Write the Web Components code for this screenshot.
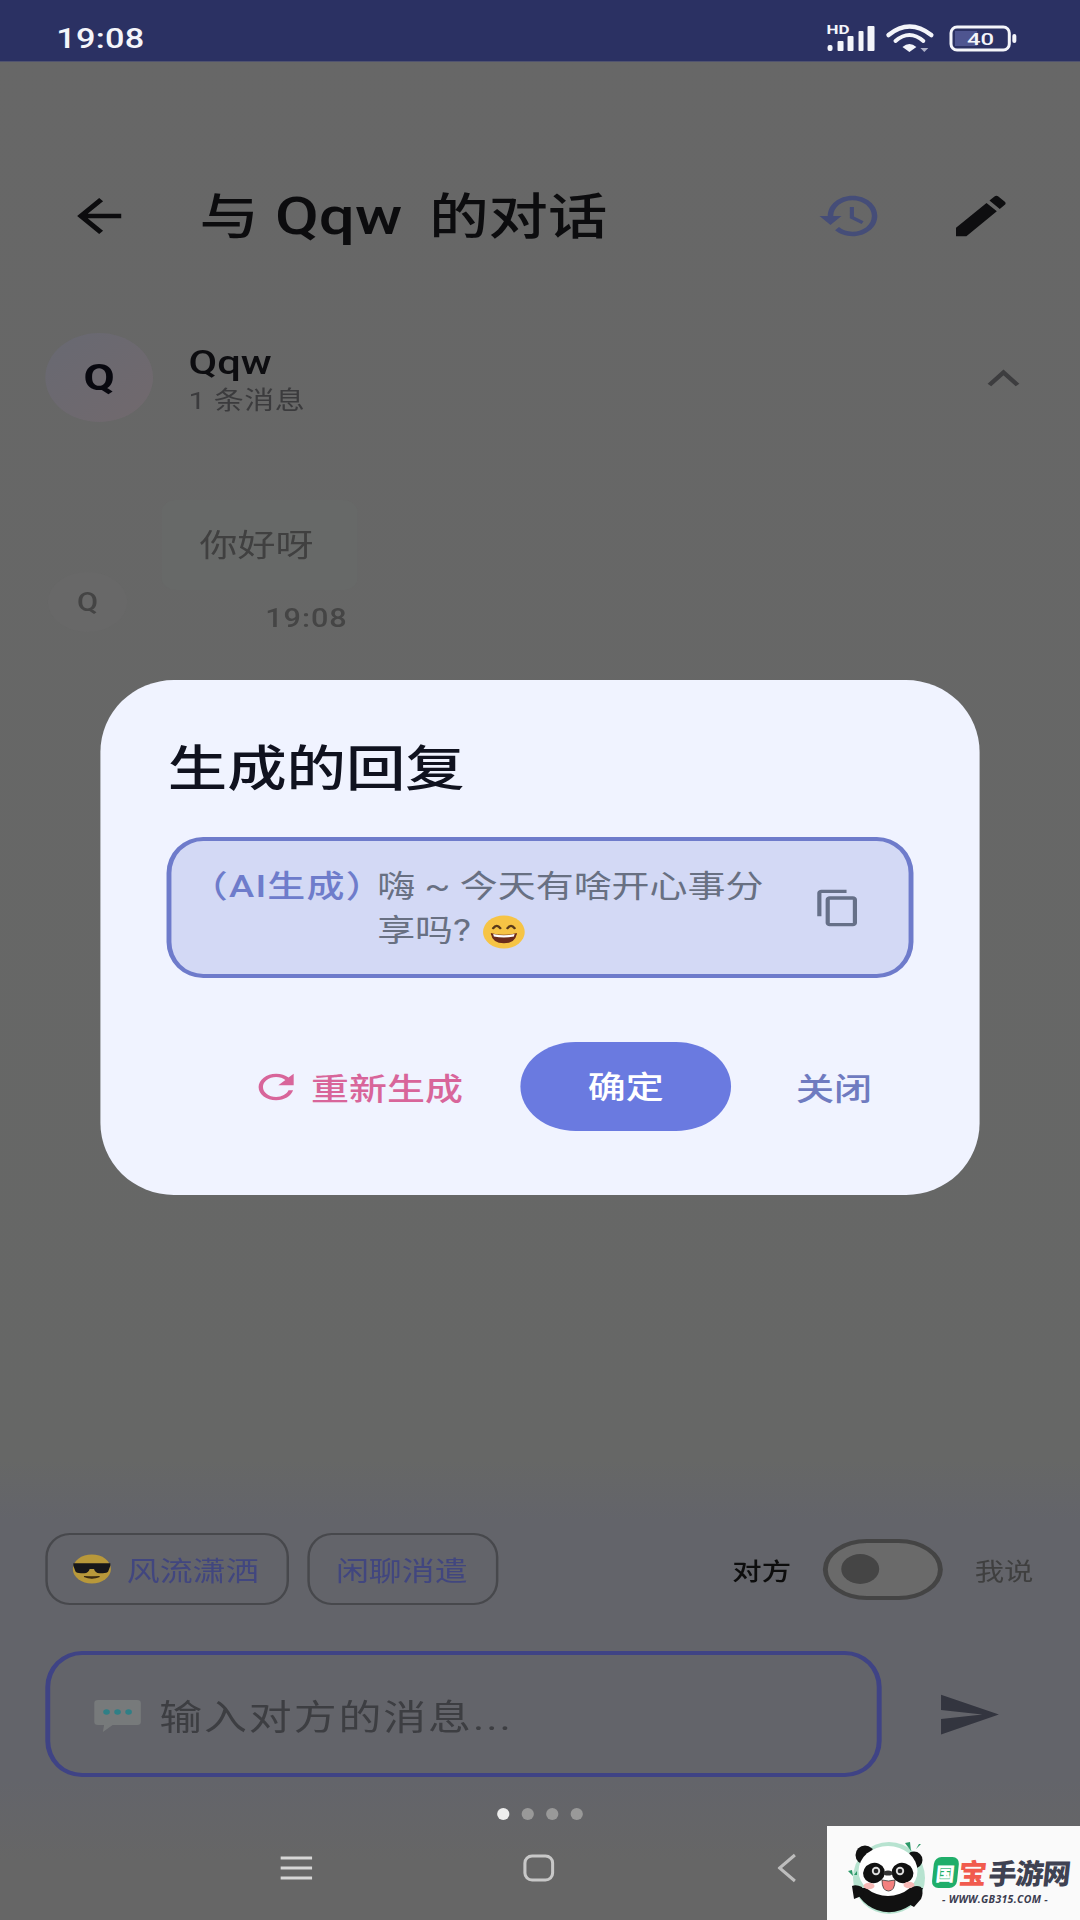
<!DOCTYPE html>
<html lang="zh">
<head>
<meta charset="utf-8">
<title>与 Qqw 的对话</title>
<style>
  html, body { margin: 0; padding: 0; background: #666; }
</style>
</head>
<body>
<phone-screen>
  <status-bar></status-bar>
  <chat-header></chat-header>
  <contact-row name="Qqw" sub="1 条消息"></contact-row>
  <message-row text="你好呀" time="19:08"></message-row>
  <reply-dialog></reply-dialog>
  <bottom-panel></bottom-panel>
  <nav-bar></nav-bar>
  <site-mark slot="mark"></site-mark>
</phone-screen>

<script>
const ICONS = {
  back: 'M20 11H7.83l5.59-5.59L12 4l-8 8 8 8 1.41-1.41L7.83 13H20v-2z',
  history: 'M13 3c-4.97 0-9 4.03-9 9H1l3.89 3.89.07.14L9 12H6c0-3.87 3.13-7 7-7s7 3.13 7 7-3.13 7-7 7c-1.93 0-3.68-.79-4.94-2.06l-1.42 1.42C8.27 19.99 10.51 21 13 21c4.97 0 9-4.03 9-9s-4.03-9-9-9zm-1 5v5l4.28 2.54.72-1.21-3.5-2.08V8H12z',
  edit: 'M3 17.25V21h3.75L17.81 9.94l-3.75-3.75L3 17.25zM20.71 7.04c.39-.39.39-1.02 0-1.41l-2.34-2.34c-.39-.39-1.02-.39-1.41 0l-1.83 1.83 3.75 3.75 1.83-1.83z',
  copy: 'M16 1H4c-1.1 0-2 .9-2 2v14h2V3h12V1zm3 4H8c-1.1 0-2 .9-2 2v14c0 1.1.9 2 2 2h11c1.1 0 2-.9 2-2V7c0-1.1-.9-2-2-2zm0 16H8V7h11v14z',
  refresh: 'M17.65 6.35C16.2 4.9 14.21 4 12 4c-4.42 0-7.99 3.58-7.99 8s3.57 8 7.99 8c3.73 0 6.84-2.55 7.73-6h-2.08c-.82 2.33-3.04 4-5.65 4-3.31 0-6-2.69-6-6s2.69-6 6-6c1.66 0 3.14.69 4.22 1.78L13 11h7V4l-2.35 2.35z',
  send: 'M2.01 21L23 12 2.01 3 2 10l15 2-15 2z'
};

class AppIcon extends HTMLElement {
  constructor() {
    super();
    this.shadowDOM = this.attachShadow({mode: 'open'});
  }
  connectedCallback() {
    const w = this.getAttribute('w') || 54;
    const h = this.getAttribute('h') || 54;
    this.shadowDOM.innerHTML = `
    <style>
      :host { display: block; flex: none; width: ${w}px; height: ${h}px; }
      svg { display: block; width: 100%; height: 100%; fill: currentColor; }
    </style>
    <svg viewBox="0 0 24 24" preserveAspectRatio="none"><path d="${ICONS[this.getAttribute('name')]}"/></svg>
    `;
  }
}
customElements.define('app-icon', AppIcon);

// the whole reference is stretched sideways, so the app is laid out 882 wide and scaled
class PhoneScreen extends HTMLElement {
  constructor() {
    super();
    this.shadowDOM = this.attachShadow({mode: 'open'});
    this.shadowDOM.innerHTML = `
    <style>
      :host {
        display: block;
        position: relative;
        width: 1080px;
        height: 1920px;
        overflow: hidden;
        background: linear-gradient(#676767 0, #666766 1460px, #63646a 1520px, #63646a 1780px, #666 1860px);
        font-family: Roboto, "Noto Sans CJK SC", sans-serif;
        color: #111;
      }
      .stretch {
        position: relative;
        display: flex;
        flex-direction: column;
        width: 882px;
        height: 1920px;
        transform: scaleX(1.2245);
        transform-origin: 0 0;
      }
    </style>
    <div class="stretch"><slot></slot></div>
    <slot name="mark"></slot>
    `;
  }
}
customElements.define('phone-screen', PhoneScreen);

class StatusBar extends HTMLElement {
  constructor() {
    super();
    this.shadowDOM = this.attachShadow({mode: 'open'});
    this.shadowDOM.innerHTML = `
    <style>
      :host {
        display: flex;
        align-items: center;
        flex: none;
        height: 62px;
        padding: 15px 52px 0 46px;
        box-sizing: border-box;
        background: #2b3163;
        border-bottom: 1px solid #50536f;
        color: #f4f5fa;
      }
      .time { font-size: 28px; font-weight: 500; letter-spacing: .2px; flex: 1; }
      svg { display: block; overflow: visible; }
      text { font-family: Roboto, sans-serif; font-weight: 700; fill: #f4f5fa; }
    </style>
    <div class="time">19:08</div>
    <svg width="39.2" height="28" viewBox="0 0 48 28" preserveAspectRatio="none" fill="#f4f5fa">
      <text x="0" y="10" font-size="13" textLength="23" lengthAdjust="spacingAndGlyphs">HD</text>
      <rect x="1" y="21" width="5" height="6" rx="2"/>
      <rect x="11" y="17" width="6" height="10" rx="1"/>
      <rect x="21" y="12" width="6" height="15" rx="1"/>
      <rect x="32" y="7" width="5" height="20" rx="1"/>
      <rect x="41" y="2" width="7" height="25" rx="1"/>
    </svg>
    <svg style="margin-left:10px" width="39" height="28" viewBox="0 0 48 28" preserveAspectRatio="none" fill="none" stroke="#f4f5fa">
      <path d="M2 11Q23-6 45 11" stroke-width="4.5" stroke-linecap="round"/>
      <path d="M9 17Q23 5 37 17" stroke-width="4" stroke-linecap="round"/>
      <path d="M16 23Q23 17 30 23L23 28Z" fill="#f4f5fa" stroke="none"/>
      <path d="M34 24l4 4 4-4z" fill="#aeb1c8" stroke="none"/>
    </svg>
    <svg style="margin-left:12px" width="55" height="27" viewBox="0 0 67 27" preserveAspectRatio="none" fill="none">
      <rect x="2" y="2" width="58" height="23" rx="6" stroke="#f4f5fa" stroke-width="3"/>
      <path d="M6 6h22v15H6z" fill="#4e5590"/>
      <rect x="63" y="9" width="4" height="9" rx="2" fill="#f4f5fa"/>
      <text x="18" y="20" font-size="17" textLength="27" lengthAdjust="spacingAndGlyphs" style="font-weight:500">40</text>
    </svg>
    `;
  }
}
customElements.define('status-bar', StatusBar);

class ChatHeader extends HTMLElement {
  constructor() {
    super();
    this.shadowDOM = this.attachShadow({mode: 'open'});
    this.shadowDOM.innerHTML = `
    <style>
      :host {
        display: flex;
        align-items: center;
        flex: none;
        height: 110px;
        margin-top: 99px;
        padding: 0 54px;
      }
      h1 {
        flex: 1;
        margin: 0 0 0 55px;
        padding-top: 3px;
        font-size: 48.5px;
        line-height: 66px;
        font-weight: 500;
        white-space: nowrap;
        color: #0c0c0e;
      }
      .latin { margin: 0 10px 0 1px; font-size: 52px; }
      .history { color: #454d78; margin-right: 53px; }
    </style>
    <app-icon name="back" style="color:#0c0c0e"></app-icon>
    <h1>与 <span class="latin">Qqw</span> 的对话</h1>
    <app-icon class="history" name="history"></app-icon>
    <app-icon name="edit" style="color:#0e0e10"></app-icon>
    `;
  }
}
customElements.define('chat-header', ChatHeader);

class ContactRow extends HTMLElement {
  constructor() {
    super();
    this.shadowDOM = this.attachShadow({mode: 'open'});
  }
  connectedCallback() {
    this.shadowDOM.innerHTML = `
    <style>
      :host {
        display: flex;
        align-items: center;
        flex: none;
        margin-top: 62px;
        padding: 0 49px 0 37px;
        gap: 29px;
      }
      .avatar {
        display: flex;
        align-items: center;
        justify-content: center;
        width: 88px;
        height: 89px;
        border-radius: 50%;
        background: linear-gradient(135deg, #686972, #71696d);
        font-size: 37px;
        font-weight: 700;
        color: #08080f;
      }
      .info { flex: 1; padding-top: 4px; }
      .name { font-size: 34px; font-weight: 500; line-height: 38px; color: #0d0d10; }
      .sub { font-size: 24.5px; line-height: 32px; margin-top: 4px; letter-spacing: .4px; color: #3b3b3d; }
      svg { display: block; width: 27px; height: 18px; }
    </style>
    <div class="avatar">Q</div>
    <div class="info">
      <div class="name">${this.getAttribute('name')}</div>
      <div class="sub">${this.getAttribute('sub')}</div>
    </div>
    <svg viewBox="0 0 27 18" preserveAspectRatio="none"><path d="M2 16L13.5 3.5 25 16" fill="none" stroke="#3d3d3f" stroke-width="4"/></svg>
    `;
  }
}
customElements.define('contact-row', ContactRow);

class MessageRow extends HTMLElement {
  constructor() {
    super();
    this.shadowDOM = this.attachShadow({mode: 'open'});
  }
  connectedCallback() {
    this.shadowDOM.innerHTML = `
    <style>
      :host {
        display: flex;
        align-items: flex-end;
        flex: none;
        margin-top: 78px;
        padding-left: 39px;
        gap: 28px;
      }
      .avatar {
        display: flex;
        align-items: center;
        justify-content: center;
        width: 65px;
        height: 60px;
        border-radius: 50%;
        background: #686868;
        font-size: 25px;
        font-weight: 500;
        color: #444;
      }
      .col { display: flex; flex-direction: column; align-items: flex-end; }
      .bubble {
        width: 160px;
        height: 90px;
        box-sizing: border-box;
        padding-left: 31px;
        border-radius: 12px;
        background: #676968;
        font-size: 31px;
        line-height: 92px;
        color: #404040;
      }
      .time { margin: 15px 8px 0 0; font-size: 25px; line-height: 27px; font-weight: 500; letter-spacing: .8px; color: #454545; }
    </style>
    <div class="avatar">Q</div>
    <div class="col">
      <div class="bubble">${this.getAttribute('text')}</div>
      <div class="time">${this.getAttribute('time')}</div>
    </div>
    `;
  }
}
customElements.define('message-row', MessageRow);

class ReplyDialog extends HTMLElement {
  constructor() {
    super();
    this.shadowDOM = this.attachShadow({mode: 'open'});
    this.shadowDOM.innerHTML = `
    <style>
      :host {
        display: block;
        position: absolute;
        left: 82px;
        top: 680px;
        width: 718px;
        height: 515px;
        box-sizing: border-box;
        padding: 60px 54px 0;
        border-radius: 60px / 72px;
        background: #f0f3ff;
      }
      h2 {
        margin: 0 0 37px 1px;
        font-size: 48.5px;
        line-height: 60px;
        font-weight: 500;
        color: #10121f;
      }
      .box {
        display: flex;
        box-sizing: border-box;
        width: 610px;
        height: 141px;
        padding: 24px 0 0 15px;
        border: 4px solid #6e7bcb;
        border-radius: 30px / 36px;
        background: #d3d9f5;
        font-size: 31px;
        line-height: 44px;
        color: #687082;
      }
      .tag { flex: none; width: 153px; color: #6e7ccb; font-weight: 500; letter-spacing: 1px; white-space: nowrap; }
      .text { width: 335px; flex: none; }
      svg.emoji { display: inline-block; vertical-align: -8px; width: 35px; height: 34px; margin-left: 2px; }
      .copy { align-self: center; margin: -24px 0 0 21px; color: #667088; }
      .actions {
        display: flex;
        align-items: center;
        justify-content: flex-end;
        margin: 64px 34px 0 0;
        font-size: 31px;
        font-weight: 500;
      }
      .redo { display: flex; align-items: center; gap: 7px; color: #d8659a; }
      .ok {
        width: 172px;
        height: 89px;
        margin: 0 53px 0 47px;
        border-radius: 45px / 44.5px;
        background: #6a7ae0;
        color: #fff;
        text-align: center;
        line-height: 92px;
      }
      .close { color: #6f7bc0; }
    </style>
    <h2>生成的回复</h2>
    <div class="box">
      <span class="tag">（AI生成）</span>
      <span class="text">嗨 ~ 今天有啥开心事分享吗? <svg class="emoji" viewBox="0 0 36 36" preserveAspectRatio="none">
        <circle cx="18" cy="18" r="17.5" fill="#f6c445"/>
        <path d="M9 14q3-5 6 0M21 14q3-5 6 0" fill="none" stroke="#5a3a1a" stroke-width="2.2" stroke-linecap="round"/>
        <path d="M7 19q11 4 22 0q-1 11-11 11T7 19z" fill="#6b2b1a"/>
        <path d="M9 20.2q9 2.6 18 0l-.6 2.6q-8.4 2-16.8 0z" fill="#fff"/>
      </svg></span>
      <app-icon class="copy" name="copy" w="41" h="40"></app-icon>
    </div>
    <div class="actions">
      <div class="redo"><app-icon name="refresh" w="43" h="40"></app-icon><span>重新生成</span></div>
      <div class="ok">确定</div>
      <div class="close">关闭</div>
    </div>
    `;
  }
}
customElements.define('reply-dialog', ReplyDialog);

class BottomPanel extends HTMLElement {
  constructor() {
    super();
    this.shadowDOM = this.attachShadow({mode: 'open'});
    this.shadowDOM.innerHTML = `
    <style>
      :host {
        display: flex;
        flex-direction: column;
        flex: none;
        margin-top: auto;
        padding: 0 37px;
      }
      .top { display: flex; align-items: center; height: 72px; }
      .chip {
        display: flex;
        align-items: center;
        box-sizing: border-box;
        height: 72px;
        padding: 0 22.6px 0 21.6px;
        margin-right: 15px;
        border: 2.4px solid #47484c;
        border-radius: 20px / 24px;
        font-size: 26.9px;
        color: #41467f;
      }
      .chip.with-face { padding-left: 19.6px; }
      .chip svg { display: block; width: 32px; height: 30px; margin-right: 13px; }
      .who { font-size: 24px; font-weight: 500; color: #0d0d0d; }
      .toggle {
        box-sizing: border-box;
        display: flex;
        align-items: center;
        width: 98px;
        height: 61px;
        margin: 0 26px;
        padding-left: 11px;
        border: 4px solid #444;
        border-radius: 36px / 30.5px;
        background: #6a6a6a;
      }
      .knob { width: 31px; height: 30px; border-radius: 50%; background: #454545; }
      .other { font-size: 24px; margin-right: 1px; color: #3f3f3f; }
      .spring { flex: 1; }
      .bottom { display: flex; align-items: center; margin-top: 46px; }
      .input {
        display: flex;
        align-items: center;
        box-sizing: border-box;
        width: 683px;
        height: 126px;
        padding: 0 0 0 35px;
        border: 4px solid #3f4385;
        border-radius: 30px / 36px;
        font-size: 35px;
        letter-spacing: 1.6px;
        color: #3d3e42;
      }
      .input svg { display: block; width: 40px; height: 33px; margin: 2px 14px 0 0; }
      .send { margin-left: 44px; color: #33353f; }
    </style>
    <div class="top">
      <div class="chip with-face">
        <svg viewBox="0 0 36 36" preserveAspectRatio="none">
          <circle cx="18" cy="18" r="17.5" fill="#b8983a"/>
          <path d="M1 11h34v3l-2 7q-1 2-5 2h-3q-4 0-5-5h-4q-1 5-5 5H8q-4 0-5-2l-2-7z" fill="#17171a"/>
          <path d="M11 27q7 4 14 0-7 1-14 0z" stroke="#3a2a12" stroke-width="1.5" fill="#3a2a12"/>
        </svg>
        <span>风流潇洒</span>
      </div>
      <div class="chip">闲聊消遣</div>
      <div class="spring"></div>
      <div class="who">对方</div>
      <div class="toggle"><div class="knob"></div></div>
      <div class="other">我说</div>
    </div>
    <div class="bottom">
      <div class="input">
        <svg viewBox="0 0 40 33" preserveAspectRatio="none">
          <path d="M4 1h32q3 0 3 3v19q0 3-3 3H16l-8 7 1-7H4q-3 0-3-3V4q0-3 3-3z" fill="#777a7b"/>
          <circle cx="11" cy="13" r="2.7" fill="#2f7f86"/><circle cx="20" cy="13" r="2.7" fill="#2f7f86"/><circle cx="29" cy="13" r="2.7" fill="#2f7f86"/>
        </svg>
        <span>输入对方的消息...</span>
      </div>
      <app-icon class="send" name="send" w="54" h="53"></app-icon>
    </div>
    `;
  }
}
customElements.define('bottom-panel', BottomPanel);

class NavBar extends HTMLElement {
  constructor() {
    super();
    this.shadowDOM = this.attachShadow({mode: 'open'});
    this.shadowDOM.innerHTML = `
    <style>
      :host { display: block; flex: none; height: 143px; }
      .dots { display: flex; justify-content: center; gap: 9.7px; padding: 31px 0 0 0; }
      .dots i { display: block; width: 10px; height: 12px; border-radius: 50%; background: #999; }
      .dots i:first-child { background: #eee; }
      .keys { display: flex; justify-content: space-between; align-items: center; margin-top: 33px; padding: 0 232px 0 229px; }
      svg { display: block; height: 30px; fill: none; stroke: #d6d6d6; stroke-width: 3; }
    </style>
    <div class="dots"><i></i><i></i><i></i><i></i></div>
    <div class="keys">
      <svg style="width:26px" viewBox="0 0 31 30" preserveAspectRatio="none"><path d="M0 5h31M0 15h31M0 25h31"/></svg>
      <svg style="width:26px;margin-right:10px" viewBox="0 0 31 30" preserveAspectRatio="none"><rect x="2" y="3" width="27" height="24" rx="7" stroke="#c8c8c8"/></svg>
      <svg style="width:15px" viewBox="0 0 18 30" preserveAspectRatio="none"><path d="M17 2L2 15l15 13" stroke="#bdbdbd"/></svg>
    </div>
    `;
  }
}
customElements.define('nav-bar', NavBar);

class SiteMark extends HTMLElement {
  constructor() {
    super();
    this.shadowDOM = this.attachShadow({mode: 'open'});
    this.shadowDOM.innerHTML = `
    <style>
      :host {
        display: flex;
        position: absolute;
        right: 0;
        bottom: 0;
        width: 253px;
        height: 94px;
        background: #fafafa;
        overflow: hidden;
        font-family: "Noto Sans CJK SC", sans-serif;
      }
      svg.panda { display: block; flex: none; width: 100px; height: 90px; margin: 4px 0 0 13px; }
      .words { margin: 29px 0 0 -7px; }
      .brand { display: flex; align-items: center; font-size: 28px; line-height: 34px; font-weight: 900; transform: skewX(-6deg); }
      .guo {
        display: block;
        width: 25px;
        height: 31px;
        border-radius: 7px;
        background: #1fae6a;
        color: #fff;
        font-size: 19px;
        line-height: 31px;
        text-align: center;
      }
      .bao { color: #f15b4e; margin-left: 1px; }
      .rest { color: #3f4252; margin-left: 2px; letter-spacing: -1px; }
      .url {
        margin: 4px 0 0 9px;
        font-family: "Open Sans", sans-serif;
        font-size: 10.5px;
        line-height: 12px;
        font-weight: 700;
        font-style: italic;
        letter-spacing: .3px;
        white-space: nowrap;
        color: #3a3c50;
      }
    </style>
    <svg class="panda" viewBox="0 0 100 90">
      <circle cx="49" cy="48" r="36" fill="#b7e3d0"/>
      <circle cx="25" cy="25" r="9.5" fill="#111"/>
      <circle cx="74" cy="30" r="8.5" fill="#111"/>
      <path d="M15 58A36 36 0 0 0 83 58Z" fill="#111"/>
      <ellipse cx="48" cy="41" rx="29.5" ry="25" fill="#fff"/>
      <ellipse cx="34" cy="43" rx="11" ry="10" fill="#111" transform="rotate(-20 34 43)"/>
      <ellipse cx="62.5" cy="43" rx="11" ry="10" fill="#111" transform="rotate(20 62.5 43)"/>
      <circle cx="36" cy="41" r="4.2" fill="#ddd"/><circle cx="36" cy="41" r="2.3" fill="#222"/>
      <circle cx="60" cy="41" r="4.2" fill="#ddd"/><circle cx="60" cy="41" r="2.3" fill="#222"/>
      <ellipse cx="48" cy="43" rx="4.5" ry="2.6" fill="#333"/>
      <path d="M42 50q6.5 2 13 0 0 11-6.5 11T42 50z" fill="#f3807f" stroke="#333" stroke-width=".8"/>
      <ellipse cx="29" cy="56" rx="5.5" ry="3.2" fill="#f7b9b6"/>
      <ellipse cx="69" cy="55" rx="5.5" ry="3.2" fill="#f7b9b6"/>
      <path d="M65 72l3-11q6-7 13-4 3 5 0 12l-7 8z" fill="#111"/>
      <path d="M12 56q4-2 10 1l2 8-10 4z" fill="#111"/>
      <path d="M65 13l6 8-1-9zM76 19l3-5 2 0z" fill="#2c9968"/>
      <path d="M8 41l5 5-1-6zM14 45l3-4 0 4z" fill="#2c9968"/>
    </svg>
    <div class="words">
      <div class="brand"><span class="guo">国</span><span class="bao">宝</span><span class="rest">手游网</span></div>
      <div class="url">- WWW.GB315.COM -</div>
    </div>
    `;
  }
}
customElements.define('site-mark', SiteMark);
</script>
</body>
</html>
